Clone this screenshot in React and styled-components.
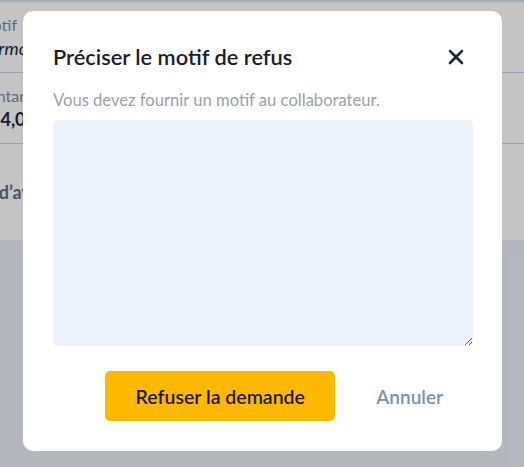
import React from "react";
import styled, { createGlobalStyle } from "styled-components";

const Global = createGlobalStyle`
  html, body { margin: 0; padding: 0; }
  body {
    width: 524px; height: 467px; overflow: hidden;
    font-family: "Source Sans Pro", Lato, "Noto Sans", sans-serif;
    background: #ebf0f8;
  }
`;

const Page = styled.div`
  position: relative;
  width: 524px;
  height: 467px;
  overflow: hidden;
`;

const Card = styled.div`
  background: #ffffff;
  height: 240px;
  border-top: 2px solid #dbe4ef;
  box-sizing: border-box;
  overflow: hidden;
`;

const Row = styled.div`
  display: flex;
  flex-direction: column;
  justify-content: center;
  gap: 3px;
  height: ${(p) => p.$h || 70}px;
  border-bottom: ${(p) => (p.$last ? "none" : "1px solid #c9d3df")};
`;

const Label = styled.span`
  font-size: 16px;
  color: #7d8a99;
  white-space: nowrap;
  margin-left: ${(p) => p.$indent || 0}px;
`;

const Value = styled.span`
  font-size: 18px;
  color: ${(p) => p.$color || "#1c2541"};
  font-style: ${(p) => (p.$italic ? "italic" : "normal")};
  font-weight: ${(p) => (p.$bold ? 700 : 400)};
  white-space: nowrap;
  margin-left: ${(p) => p.$indent || 0}px;
`;

const Overlay = styled.div`
  position: absolute;
  inset: 0;
  background: rgba(0, 0, 0, 0.23);
`;

const Modal = styled.div`
  position: absolute;
  left: 23px;
  top: 11px;
  width: 479px;
  height: 440px;
  box-sizing: border-box;
  background: #ffffff;
  border-radius: 10px;
  padding: 26px 29px 30px 30px;
  display: flex;
  flex-direction: column;
`;

const Header = styled.div`
  display: flex;
  align-items: center;
  justify-content: space-between;
  height: 38px;
`;

const Title = styled.h2`
  margin: 0;
  font-size: 21.8px;
  font-weight: 600;
  color: #1c1c2a;
`;

const CloseButton = styled.button`
  border: none;
  background: none;
  padding: 0;
  margin: 2px 9px 0 0;
  width: 16px;
  height: 16px;
  display: flex;
  cursor: pointer;
`;

const Hint = styled.p`
  margin: 15px 0 10px;
  font-size: 16.6px;
  color: #9b9fad;
`;

const TextArea = styled.textarea`
  display: block;
  width: 100%;
  height: 226px;
  box-sizing: border-box;
  border: none;
  border-radius: 5px;
  background: #edf3fb;
  resize: vertical;
  outline: none;
  font-family: inherit;
  font-size: 16px;
`;

const Actions = styled.div`
  display: flex;
  align-items: center;
  justify-content: flex-end;
  gap: 41px;
  margin-top: 25px;
  padding-right: 30px;
`;

const PrimaryButton = styled.button`
  width: 230px;
  height: 50px;
  border: none;
  border-radius: 5px;
  background: #ffb800;
  color: #1a1a1a;
  font-family: inherit;
  font-size: 19.5px;
  font-weight: 600;
  cursor: pointer;
`;

const LinkButton = styled.button`
  border: none;
  background: none;
  padding: 0;
  color: #7a95aa;
  font-family: inherit;
  font-size: 19px;
  font-weight: 600;
  cursor: pointer;
`;

export default function App() {
  return (
    <Page>
      <Global />
      <Card>
        <Row>
          <Label $indent={-22}>Motif</Label>
          <Value $italic $indent={-13}>Armoire</Value>
        </Row>
        <Row>
          <Label $indent={-27}>Montant</Label>
          <Value $bold $indent={-10}>14,00 €</Value>
        </Row>
        <Row $last $h={96}>
          <Value $bold $color="#5b6d8a" $indent={-83}>Demande d’avance</Value>
        </Row>
      </Card>
      <Overlay />
      <Modal role="dialog">
        <Header>
          <Title>Préciser le motif de refus</Title>
          <CloseButton aria-label="Fermer">
            <svg width="16" height="16" viewBox="0 0 16 16">
              <path d="M2 2 L14 14 M14 2 L2 14" stroke="#1c2238" strokeWidth="2.6" strokeLinecap="round" />
            </svg>
          </CloseButton>
        </Header>
        <Hint>Vous devez fournir un motif au collaborateur.</Hint>
        <TextArea />
        <Actions>
          <PrimaryButton>Refuser la demande</PrimaryButton>
          <LinkButton>Annuler</LinkButton>
        </Actions>
      </Modal>
    </Page>
  );
}
